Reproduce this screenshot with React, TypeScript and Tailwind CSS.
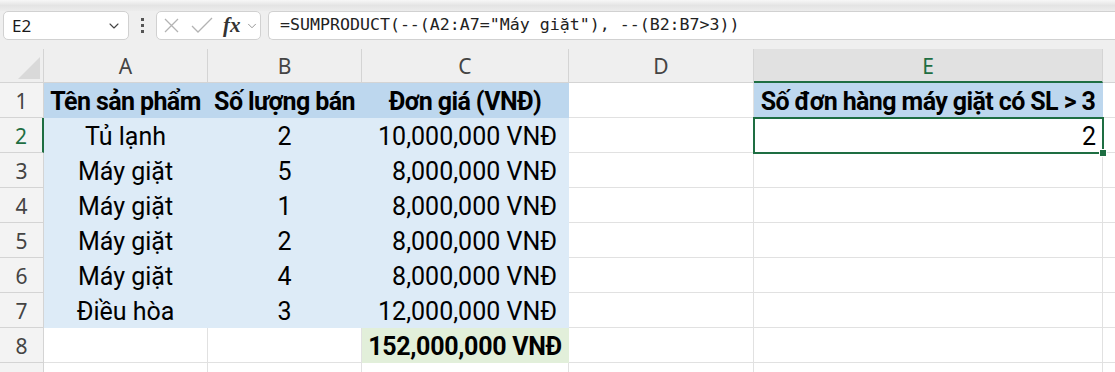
import { ChevronDown } from "lucide-react";

const cellFont = { fontFamily: "Roboto, 'Noto Sans', sans-serif" };

type Cell = {
  text?: string;
  cls?: string;
};

const blueHead = "bg-[#bdd7ee] border-[#bdd7ee] font-bold tracking-[-0.6px] justify-center";
const blue = "bg-[#ddebf7] border-[#ddebf7]";
const plain = "bg-white border-[#e1e1e1]";

const rows: Cell[][] = [
  [
    { text: "Tên sản phẩm", cls: blueHead },
    { text: "Số lượng bán", cls: blueHead },
    { text: "Đơn giá (VNĐ)", cls: blueHead },
    { cls: plain },
    { text: "Số đơn hàng máy giặt có SL > 3", cls: blueHead },
  ],
  [
    { text: "Tủ lạnh", cls: `${blue} justify-center` },
    { text: "2", cls: `${blue} justify-center` },
    { text: "10,000,000 VNĐ", cls: `${blue} justify-end pr-[11px]` },
    { cls: plain },
    { text: "2", cls: `${plain} justify-end pr-[6px]` },
  ],
  ...[
    ["Máy giặt", "5", "8,000,000 VNĐ"],
    ["Máy giặt", "1", "8,000,000 VNĐ"],
    ["Máy giặt", "2", "8,000,000 VNĐ"],
    ["Máy giặt", "4", "8,000,000 VNĐ"],
    ["Điều hòa", "3", "12,000,000 VNĐ"],
  ].map((r) => [
    { text: r[0], cls: `${blue} justify-center` },
    { text: r[1], cls: `${blue} justify-center` },
    { text: r[2], cls: `${blue} justify-end pr-[11px]` },
    { cls: plain },
    { cls: plain },
  ]),
  [
    { cls: plain },
    { cls: plain },
    {
      text: "152,000,000 VNĐ",
      cls: "bg-[#e2efda] border-[#e2efda] justify-center font-bold tracking-[-0.3px] text-[#375623]",
    },
    { cls: plain },
    { cls: plain },
  ],
  [{ cls: plain }, { cls: plain }, { cls: plain }, { cls: plain }, { cls: plain }],
];

const widths = ["w-[164px]", "w-[154px]", "w-[207px]", "w-[185px]", "w-[349px]"];
const letters = ["A", "B", "C", "D", "E"];

const FormulaBar = () => (
  <div className="relative h-[49px] bg-[#efefef]">
    <div className="absolute left-0 top-0 h-[11px] w-full bg-gradient-to-b from-[#f7f7f7] via-[#e4e4e4] to-[#ececec]" />
    <div className="relative flex items-center pt-[11px] pl-[3px]">
      <div className="flex h-[29px] w-[126px] items-center justify-between rounded-[5px] border border-[#d1d1d1] bg-white pl-[8px] pr-[6px]">
        <span className="text-[17px] text-[#1a1a1a]" style={{ fontFamily: "'Noto Sans', sans-serif" }}>
          E2
        </span>
        <ChevronDown className="h-[16px] w-[16px] text-[#444]" strokeWidth={1.6} />
      </div>
      <div className="flex w-[27px] flex-col items-center gap-[3px]">
        <span className="h-[3px] w-[3px] bg-[#555]" />
        <span className="h-[3px] w-[3px] bg-[#555]" />
        <span className="h-[3px] w-[3px] bg-[#555]" />
      </div>
      <div className="flex h-[29px] w-[105px] items-center rounded-[5px] border border-[#d1d1d1] bg-white pl-[6px]">
        <svg width="17" height="17" viewBox="0 0 17 17" fill="none" stroke="#b3b3b3" strokeWidth="1.3">
          <path d="M2 2 L15 15 M15 2 L2 15" />
        </svg>
        <svg className="ml-[11px]" width="22" height="17" viewBox="0 0 22 17" fill="none" stroke="#b3b3b3" strokeWidth="1.3">
          <path d="M1 9 L7 15 L21 1" />
        </svg>
        <span
          className="ml-[10px] text-[21px] font-bold italic leading-none text-[#333]"
          style={{ fontFamily: "'Liberation Serif', serif" }}
        >
          fx
        </span>
        <ChevronDown className="ml-[4px] h-[14px] w-[14px] text-[#888]" strokeWidth={1.5} />
      </div>
      <div className="ml-[7px] flex h-[29px] flex-1 items-center rounded-l-[5px] border border-r-0 border-[#d1d1d1] bg-white pl-[11px]">
        <span className="text-[16.6px] text-[#222]" style={{ fontFamily: "'DejaVu Sans Mono', monospace" }}>
          =SUMPRODUCT(--(A2:A7="Máy giặt"), --(B2:B7&gt;3))
        </span>
      </div>
    </div>
  </div>
);

const HeaderRow = () => (
  <div className="flex h-[34px]">
    <div className="relative w-[44px] border-r border-b border-[#d4d4d4] bg-[#efefef]">
      <svg className="absolute right-[3px] bottom-[3px]" width="22" height="22" viewBox="0 0 22 22">
        <polygon points="22,0 22,22 0,22" fill="#d9d9d9" />
      </svg>
    </div>
    {letters.map((l, i) => (
      <div
        key={l}
        className={`${widths[i]} flex items-center justify-center border-r pt-[3px] text-[21px] ${
          l === "E"
            ? "border-b-2 border-[#d4d4d4] border-b-[#1e6e42] bg-[#e1e1e1] text-[#1e6e42]"
            : "border-b border-[#d4d4d4] bg-[#efefef] text-[#444]"
        }`}
        style={{ fontFamily: "'Noto Sans', sans-serif" }}
      >
        {l}
      </div>
    ))}
    <div className="flex-1 border-b border-[#d4d4d4] bg-[#efefef]" />
  </div>
);

export default function App() {
  return (
    <div className="h-[372px] w-[1115px] overflow-hidden bg-white">
      <FormulaBar />
      <HeaderRow />
      <div className="relative">
        {rows.map((row, r) => (
          <div key={r} className="flex h-[35px]">
            <div
              className={`flex w-[44px] items-center justify-center border-b border-[#d4d4d4] bg-[#f3f3f3] pt-[3px] text-[21px] ${
                r === 1 ? "border-r-2 border-r-[#1e6e42] text-[#1e6e42]" : "border-r text-[#444]"
              }`}
              style={{ fontFamily: "'Noto Sans', sans-serif" }}
            >
              {r < 8 ? r + 1 : ""}
            </div>
            {row.map((c, i) => (
              <div
                key={i}
                className={`${widths[i]} flex items-center whitespace-nowrap border-r border-b pt-[3px] text-[25px] text-black ${c.cls}`}
                style={cellFont}
              >
                {c.text}
              </div>
            ))}
            <div className="flex-1 border-b border-[#e1e1e1]" />
          </div>
        ))}
        {/* active cell E2 */}
        <div className="pointer-events-none absolute left-[753px] top-[34px] h-[37px] w-[351px] border-2 border-[#1e6e42]">
          <div className="absolute -right-[5px] -bottom-[5px] h-[8px] w-[8px] border border-white bg-[#1e6e42]" />
        </div>
      </div>
    </div>
  );
}
